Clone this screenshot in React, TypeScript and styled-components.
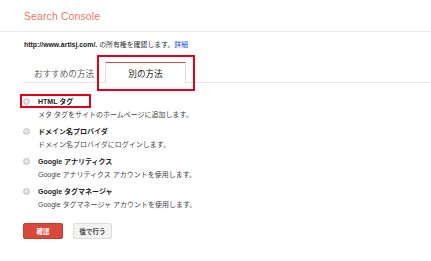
import React from "react";
import styled, { createGlobalStyle } from "styled-components";

const GlobalStyle = createGlobalStyle`
  html, body {
    margin: 0;
    padding: 0;
    background: #ffffff;
  }
  body {
    font-family: "Liberation Sans", Arial, "Noto Sans CJK JP", sans-serif;
    color: #222222;
  }
`;

type Method = {
  id: string;
  title: string;
  description: string;
  highlighted?: boolean;
};

const methods: Method[] = [
  {
    id: "html",
    title: "HTML タグ",
    description: "メタ タグをサイトのホームページに追加します。",
    highlighted: true
  },
  {
    id: "domain",
    title: "ドメイン名プロバイダ",
    description: "ドメイン名プロバイダにログインします。"
  },
  {
    id: "analytics",
    title: "Google アナリティクス",
    description: "Google アナリティクス アカウントを使用します。"
  },
  {
    id: "gtm",
    title: "Google タグマネージャ",
    description: "Google タグマネージャ アカウントを使用します。"
  }
];

const Page = styled.div`
  width: 431px;
  min-height: 261px;
  background: #ffffff;
`;

const Header = styled.header`
  height: 31px;
  display: flex;
  align-items: center;
  padding-left: 24px;
  border-bottom: 1px solid #ebebeb;
`;

const Brand = styled.div`
  font-size: 10.5px;
  color: #e8786a;
  letter-spacing: 0.1px;
`;

const Content = styled.main`
  padding: 0 0 0 24px;
`;

const Ownership = styled.p`
  margin: 7px 0 0;
  font-size: 6.9px;
  line-height: 12px;
  color: #333333;
`;

const Site = styled.b`
  color: #222222;
`;

const DetailLink = styled.a`
  color: #1155cc;
  text-decoration: none;
`;

const TabBar = styled.div`
  display: flex;
  margin: 11px 0 0 -1px;
  border-bottom: 1px solid #e5e5e5;
`;

const Tab = styled.div<{ $active?: boolean }>`
  position: relative;
  box-sizing: border-box;
  display: flex;
  align-items: center;
  justify-content: center;
  font-size: 8.6px;
  width: ${(p) => (p.$active ? "81px" : "82px")};
  height: ${(p) => (p.$active ? "21px" : "20px")};
  color: ${(p) => (p.$active ? "#222222" : "#666666")};
  background: #ffffff;
  border: 1px solid ${(p) => (p.$active ? "#dddddd" : "transparent")};
  border-top-color: ${(p) => (p.$active ? "#dd4b39" : "transparent")};
  border-bottom: none;
  margin-bottom: ${(p) => (p.$active ? "-1px" : "0")};
  padding-bottom: ${(p) => (p.$active ? "1px" : "0")};

  ${(p) =>
    p.$active &&
    `
    &::after {
      content: "";
      position: absolute;
      left: -9px;
      top: -8px;
      width: 98px;
      height: 36px;
      box-sizing: border-box;
      border: 2px solid #e5001c;
    }
  `}
`;

const MethodList = styled.div`
  display: flex;
  flex-direction: column;
  gap: 4px;
  margin: 12px 0 0 -1px;
`;

const MethodItem = styled.label`
  display: flex;
  flex-direction: column;
  height: 26px;
`;

const MethodHead = styled.div<{ $highlighted?: boolean }>`
  position: relative;
  display: flex;
  align-items: center;
  gap: 8px;
  height: 12px;

  ${(p) =>
    p.$highlighted &&
    `
    &::after {
      content: "";
      position: absolute;
      left: -3px;
      top: -1px;
      width: 71px;
      height: 14px;
      box-sizing: border-box;
      border: 2px solid #e5001c;
    }
  `}
`;

const Radio = styled.span`
  width: 7px;
  height: 7px;
  flex: none;
  border-radius: 50%;
  box-sizing: border-box;
  border: 1px solid #c4c4c4;
  background: radial-gradient(circle at 50% 40%, #efefef 0%, #cfcfcf 100%);
`;

const MethodTitle = styled.span`
  font-size: 7px;
  font-weight: bold;
  color: #222222;
`;

const MethodDescription = styled.div`
  margin: 2px 0 0 15px;
  font-size: 7px;
  line-height: 12px;
  color: #444444;
`;

const Actions = styled.div`
  display: flex;
  gap: 10px;
  margin: 12px 0 0 -1px;
`;

const Button = styled.button<{ $primary?: boolean }>`
  box-sizing: border-box;
  height: 16px;
  width: ${(p) => (p.$primary ? "40px" : "39px")};
  padding: 0;
  font-family: inherit;
  font-size: 6.5px;
  font-weight: bold;
  border-radius: 2px;
  color: ${(p) => (p.$primary ? "#ffffff" : "#444444")};
  background: ${(p) => (p.$primary ? "#d9493a" : "#f3f3f3")};
  border: 1px solid ${(p) => (p.$primary ? "#c73c2c" : "#dcdcdc")};
`;

export default function App() {
  return (
    <Page>
      <GlobalStyle />
      <Header>
        <Brand>Search Console</Brand>
      </Header>
      <Content>
        <Ownership>
          <Site>http://www.artisj.com/.</Site> の所有権を確認します。
          <DetailLink href="#">詳細</DetailLink>
        </Ownership>
        <TabBar>
          <Tab>おすすめの方法</Tab>
          <Tab $active>別の方法</Tab>
        </TabBar>
        <MethodList>
          {methods.map((m) => (
            <MethodItem key={m.id}>
              <MethodHead $highlighted={m.highlighted}>
                <Radio />
                <MethodTitle>{m.title}</MethodTitle>
              </MethodHead>
              <MethodDescription>{m.description}</MethodDescription>
            </MethodItem>
          ))}
        </MethodList>
        <Actions>
          <Button $primary>確認</Button>
          <Button>後で行う</Button>
        </Actions>
      </Content>
    </Page>
  );
}
